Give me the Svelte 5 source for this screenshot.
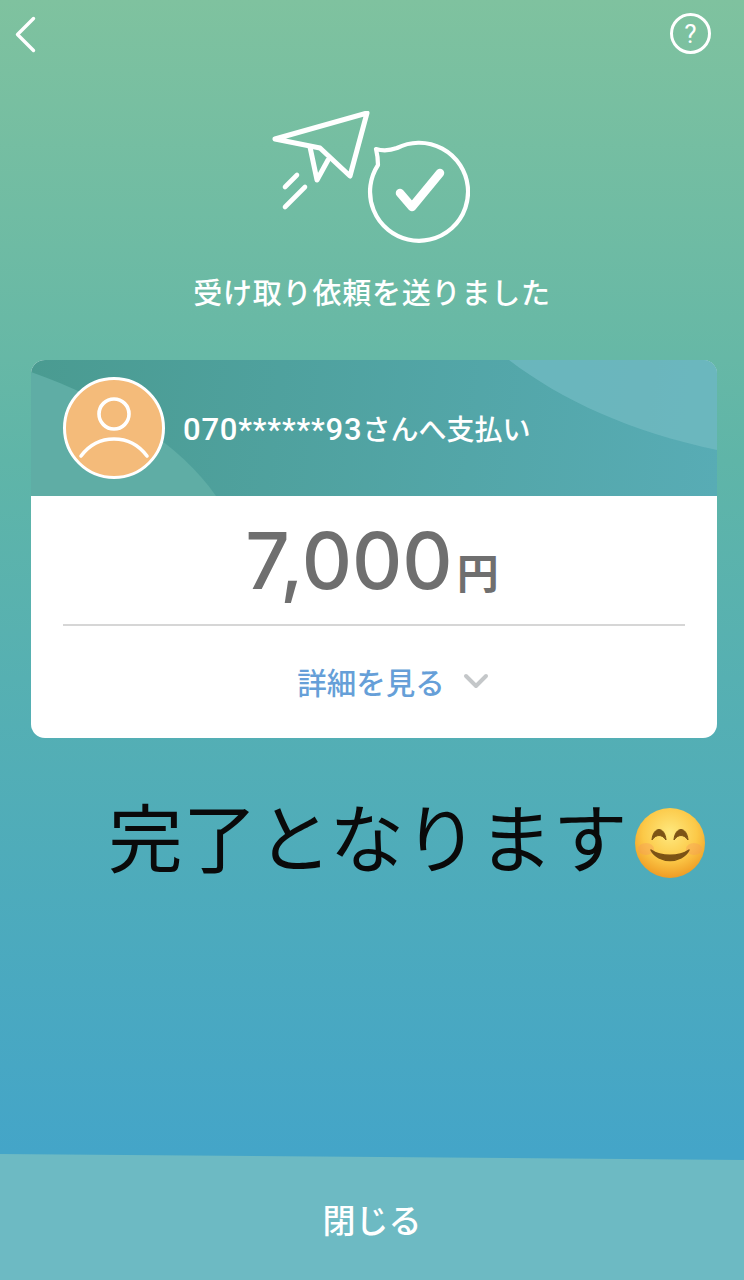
<script lang="ts">
  let showDetails = $state(false);
  const recipient = '070******93';
  const amount = 7000;
</script>

<div class="page">
  <div class="topbar">
    <button class="icon-btn" aria-label="戻る">
      <svg width="24" height="38" viewBox="0 0 24 38" fill="none" stroke="#fff" stroke-width="3.4" stroke-linecap="round" stroke-linejoin="round">
        <path d="M19.5 2.5 L3.5 18.5 L19.5 34.5" />
      </svg>
    </button>
    <button class="icon-btn help" aria-label="ヘルプ">?</button>
  </div>

  <svg class="hero" width="200" height="132" viewBox="0 0 200 132" fill="none" stroke="#fff" stroke-linecap="round" stroke-linejoin="round">
    <path stroke-width="5" d="M97 2 L5 28 L50 37 L80 65 Z" />
    <path stroke-width="5" d="M40 36 L47 69 L58 49" />
    <path stroke-width="4.6" d="M15 76 L27 64 M15 96 L35 76" />
    <path stroke-width="4.2" d="M106 38 Q116 41 127 37 A49 49 0 1 1 108 54 Q108 46 106 38 Z" />
    <path stroke-width="8.5" d="M130 82 L142 96 L170 62" />
  </svg>

  <h1 class="title">受け取り依頼を送りました</h1>

  <section class="card">
    <header class="card-head">
      <svg class="waves" viewBox="0 0 686 136" preserveAspectRatio="none" aria-hidden="true">
        <path d="M478 0 C530 40 600 72 686 90 L686 0 Z" fill="#6fb9c0" fill-opacity=".85" />
        <path d="M0 12 C80 40 150 85 185 136 L0 136 Z" fill="#5fada5" />
      </svg>
      <div class="avatar">
        <svg width="96" height="96" viewBox="0 0 96 96" fill="none" stroke="#fff" stroke-width="3.6" stroke-linecap="round">
          <circle cx="48" cy="34" r="15" />
          <path d="M15 76 C24 64 36 59 48 59 C60 59 72 64 81 76" />
        </svg>
      </div>
      <span class="payee"><span class="masked">{recipient}</span>さんへ支払い</span>
    </header>

    <div class="amount">
      <span class="num">{amount.toLocaleString('en-US')}</span><span class="unit">円</span>
    </div>

    <button class="details" onclick={() => (showDetails = !showDetails)}>
      <span>詳細を見る</span>
      <svg width="26" height="16" viewBox="0 0 26 16" fill="none" stroke="#c4c7c9" stroke-width="4" stroke-linecap="round" stroke-linejoin="round">
        <path d="M3 3 L13 13 L23 3" />
      </svg>
    </button>
  </section>

  <div class="note">
    <span class="note-text">完了となります</span>
    <svg width="72" height="72" viewBox="0 0 72 72" aria-label="笑顔">
      <defs>
        <radialGradient id="face" cx="50%" cy="36%" r="64%">
          <stop offset="0" stop-color="#fee97f" />
          <stop offset=".6" stop-color="#fcc948" />
          <stop offset="1" stop-color="#ef9c24" />
        </radialGradient>
      </defs>
      <circle cx="36" cy="36" r="35" fill="url(#face)" />
      <ellipse cx="12" cy="42" rx="8" ry="6" fill="#f59a5a" fill-opacity=".4" />
      <ellipse cx="60" cy="42" rx="8" ry="6" fill="#f59a5a" fill-opacity=".4" />
      <path d="M18 33 C19 19 31 19 32 33 C28 27 22 27 18 33 Z M40 33 C41 19 53 19 54 33 C50 27 44 27 40 33 Z" fill="#7c5315" stroke="#7c5315" stroke-width="1" stroke-linejoin="round" />
      <path d="M17 43 C27 50 45 50 55 43 C48 57 24 57 17 43 Z" fill="#7c5315" stroke="#7c5315" stroke-width="1.5" stroke-linejoin="round" />
    </svg>
  </div>

  <button class="close">閉じる</button>
</div>

<style>
  :global(body) { margin: 0; }
  .page {
    width: 744px;
    height: 1280px;
    position: relative;
    overflow: hidden;
    display: flex;
    flex-direction: column;
    align-items: center;
    background: linear-gradient(180deg, #7fc29f 0%, #5fb5a8 36%, #4dabbc 70%, #44a5c8 90%);
    font-family: "Noto Sans CJK JP", "Noto Sans", sans-serif;
    color: #fff;
  }
  button { font: inherit; color: inherit; background: none; border: 0; padding: 0; cursor: pointer; }
  .topbar {
    align-self: stretch;
    height: 68px;
    padding: 16px 33px 0 14px;
    box-sizing: border-box;
    display: flex;
    justify-content: space-between;
    align-items: flex-start;
  }
  .icon-btn { display: flex; align-items: center; justify-content: center; }
  .help {
    width: 41px;
    height: 41px;
    border: 3px solid #fff;
    border-radius: 50%;
    box-sizing: border-box;
    font-size: 26px;
    font-weight: 400;
    line-height: 1;
    margin-top: -3px;
    font-family: "Roboto", sans-serif;
  }
  .hero { margin: 43px 0 0 -4px; flex: none; }
  .title {
    margin: 26px 0 0;
    font-size: 29px;
    line-height: 44px;
    font-weight: 500;
    letter-spacing: 0.8px;
  }
  .card {
    margin: 47px 0 0 4px;
    width: 686px;
    height: 378px;
    border-radius: 14px;
    background: #fff;
    overflow: hidden;
    display: flex;
    flex-direction: column;
    flex: none;
  }
  .card-head {
    height: 136px;
    position: relative;
    display: flex;
    align-items: center;
    gap: 18px;
    padding-left: 32px;
    background: linear-gradient(98deg, #4a9b91 0%, #58acb5 100%);
    flex: none;
  }
  .waves { position: absolute; inset: 0; width: 100%; height: 100%; }
  .avatar {
    position: relative;
    width: 102px;
    height: 102px;
    box-sizing: border-box;
    border-radius: 50%;
    border: 3px solid #fff;
    background: #f4bb7a;
    display: flex;
    align-items: center;
    justify-content: center;
    flex: none;
  }
  .payee {
    position: relative;
    font-size: 28px;
    font-weight: 500;
  }
  .masked {
    font-family: "Roboto", sans-serif;
    font-size: 31px;
    letter-spacing: 0.8px;
  }
  .amount {
    margin: 0 32px;
    height: 130px;
    box-sizing: border-box;
    border-bottom: 2px solid #d6d6d6;
    display: flex;
    justify-content: center;
    align-items: baseline;
    color: #6f6f6f;
    line-height: 129px;
    padding-right: 4px;
  }
  .num { font-size: 78px; font-family: "Inter", sans-serif; font-weight: 500; }
  .unit { font-size: 42px; font-weight: 700; margin-left: 4px; }
  .details {
    flex: 1;
    display: flex;
    align-items: center;
    justify-content: center;
    gap: 18px;
    color: #669fd8;
    font-size: 29.5px;
    font-weight: 500;
    padding: 0 0 2px 38px;
  }
  .note {
    margin: 69px 0 0 76px;
    display: flex;
    align-items: center;
    gap: 6px;
    color: #0a0a0a;
    white-space: nowrap;
  }
  .note-text {
    font-size: 74.5px;
    line-height: 88px;
    margin: -16px 0 0 -6px;
  }
  .note svg { flex: none; }
  .close {
    position: absolute;
    left: 0;
    right: 0;
    bottom: 0;
    height: 126px;
    background: #6dbac3;
    clip-path: polygon(0 0, 100% 6px, 100% 100%, 0 100%);
    font-size: 33px;
    font-weight: 500;
    padding-top: 3px;
  }
</style>
